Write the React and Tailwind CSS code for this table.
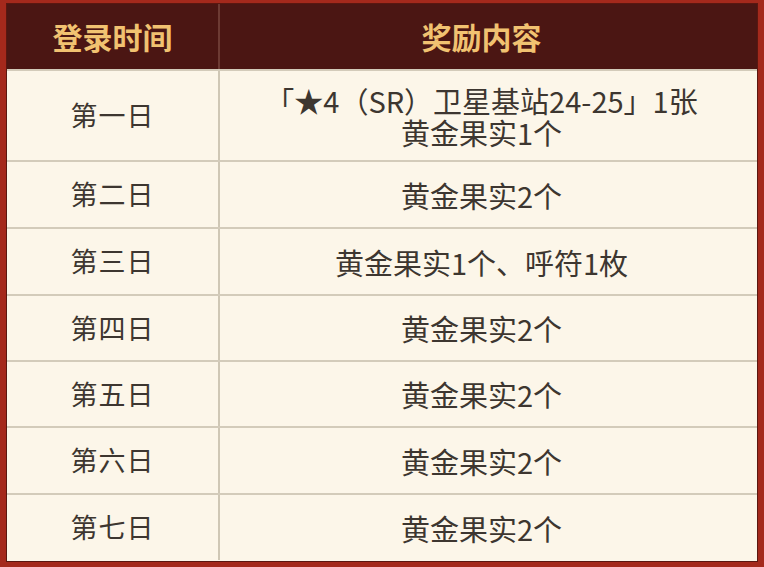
import React from "react";

const rows = [
  { day: "第一日", lines: ["「★4（SR）卫星基站24-25」1张", "黄金果实1个"], h: "h-[91px]" },
  { day: "第二日", lines: ["黄金果实2个"], h: "h-[67px]" },
  { day: "第三日", lines: ["黄金果实1个、呼符1枚"], h: "h-[67px]" },
  { day: "第四日", lines: ["黄金果实2个"], h: "h-[66px]" },
  { day: "第五日", lines: ["黄金果实2个"], h: "h-[66px]" },
  { day: "第六日", lines: ["黄金果实2个"], h: "h-[67px]" },
  { day: "第七日", lines: ["黄金果实2个"], h: "h-[67px]" },
];

export default function App() {
  return (
    <div
      className="w-[764px] h-[567px] bg-[#a4291c] pt-[3px] pl-[6px] pr-[6px] pb-[5px]"
      style={{ fontFamily: '"Noto Sans CJK SC", "Noto Sans", sans-serif' }}
    >
      <div className="h-full border border-[#5a1710] bg-[#fcf6e9] flex flex-col overflow-hidden">
        <div className="flex h-[65px] shrink-0 bg-[#4b1613] text-[#f1c271] text-[30px] font-bold">
          <div className="w-[213px] flex items-center justify-center border-r-2 border-[#6d3a33]">登录时间</div>
          <div className="flex-1 flex items-center justify-center pr-[14px]">奖励内容</div>
        </div>
        {rows.map((r, i) => (
          <div
            key={i}
            className={`flex shrink-0 ${r.h} border-t-2 border-[#d3cbba] text-[#3d3630]`}
          >
            <div className="w-[213px] flex items-center justify-center border-r-2 border-[#cfc7b5] text-[27px] tracking-[1px]">
              {r.day}
            </div>
            <div className="flex-1 flex items-center justify-center pr-[14px] text-[29px] leading-[32px]">
              <p className="text-center">
                {r.lines.map((l, j) => (
                  <React.Fragment key={j}>
                    {j > 0 && <br />}
                    {l}
                  </React.Fragment>
                ))}
              </p>
            </div>
          </div>
        ))}
      </div>
    </div>
  );
}
